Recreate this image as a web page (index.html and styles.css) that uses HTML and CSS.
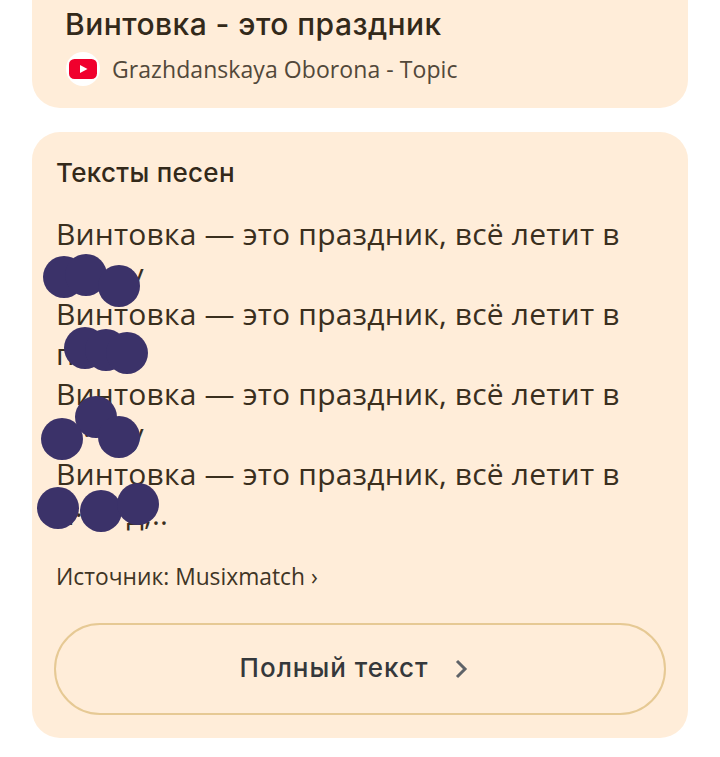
FILE: index.html
```html
<!DOCTYPE html>
<html lang="ru">
<head>
<meta charset="utf-8">
<title>Винтовка - это праздник</title>
<link rel="stylesheet" href="styles.css">
</head>
<body>
<main class="page">
  <section class="card card-top">
    <h1 class="title">Винтовка - это праздник</h1>
    <div class="channel">
      <span class="yt-badge">
        <svg class="yt-icon" viewBox="0 0 28 20" width="28" height="20" aria-hidden="true">
          <rect x="0" y="0" width="28" height="20" rx="5.5" fill="#f0002d"/>
          <path d="M11 6l7.5 4-7.5 4z" fill="#fff"/>
        </svg>
      </span>
      <span class="channel-name">Grazhdanskaya Oborona - Topic</span>
    </div>
  </section>
  <section class="card card-lyrics">
    <h2 class="heading">Тексты песен</h2>
    <div class="lyrics-wrap">
      <p class="lyrics">Винтовка — это праздник, всё летит в<br>п······&#8201;у<br>Винтовка — это праздник, всё летит в<br>п······&#8201;у<br>Винтовка — это праздник, всё летит в<br>п······&#8201;у<br>Винтовка — это праздник, всё летит в<br>п······&#8202;д,..</p>
      <svg class="blobs" viewBox="0 0 720 757" width="720" height="757" aria-hidden="true">
        <g fill="#3b3269">
          <circle cx="64" cy="277" r="21"/><circle cx="86" cy="275" r="21"/><circle cx="119" cy="286" r="21"/>
          <circle cx="85" cy="348" r="21"/><circle cx="106" cy="350" r="21"/><circle cx="127" cy="353" r="21"/>
          <circle cx="96" cy="417" r="21"/><circle cx="62" cy="439" r="21"/><circle cx="119" cy="437" r="21"/>
          <circle cx="58" cy="508" r="21"/><circle cx="101" cy="511" r="21"/><circle cx="138" cy="504" r="21"/>
        </g>
      </svg>
    </div>
    <a class="source">Источник: Musixmatch ›</a>
    <div class="full-btn">
      <span class="full-label">Полный текст</span>
      <svg class="chev" viewBox="0 0 16 22" width="16" height="22" aria-hidden="true">
        <path d="M3 3l8 8-8 8" fill="none" stroke="#5f6368" stroke-width="3"/>
      </svg>
    </div>
  </section>
</main>
</body>
</html>
```

FILE: styles.css
```css
html, body {
  margin: 0;
  padding: 0;
  background: #fff;
}
body {
  font-family: "Open Sans", "Noto Sans", sans-serif;
  overflow: hidden;
  height: 757px;
}
.page {
  display: flex;
  flex-direction: column;
  gap: 24px;
  padding: 0 32px;
  position: relative;
}
.card {
  background: #ffedd9;
}
.card-top {
  height: 108px;
  border-radius: 0 0 28px 28px;
  box-sizing: border-box;
  padding: 4px 33px 0;
}
.title {
  margin: 0;
  font-family: Inter, "Open Sans", sans-serif;
  font-size: 30px;
  letter-spacing: 0.45px;
  line-height: 40px;
  font-weight: 500;
  color: #33291a;
}
.channel {
  display: flex;
  align-items: center;
  gap: 12px;
  margin-top: 8px;
  margin-left: 1px;
}
.yt-badge {
  width: 34px;
  height: 34px;
  border-radius: 50%;
  background: #fff;
  display: flex;
  align-items: center;
  justify-content: center;
}
.channel-name {
  font-size: 23px;
  letter-spacing: 0.07px;
  line-height: 34px;
  color: #52483a;
}
.card-lyrics {
  height: 606px;
  border-radius: 28px;
  box-sizing: border-box;
  padding: 24px 22px 0 24px;
}
.heading {
  margin: 0;
  font-family: Inter, "Open Sans", sans-serif;
  font-size: 26px;
  letter-spacing: 0.3px;
  line-height: 34px;
  font-weight: 500;
  color: #33291a;
}
.lyrics-wrap {
  margin-top: 24px;
}
.lyrics {
  margin: 0;
  font-size: 30px;
  letter-spacing: 0.2px;
  line-height: 40px;
  color: #3a2f1e;
  white-space: nowrap;
}
.blobs {
  position: absolute;
  top: 0;
  left: 0;
  pointer-events: none;
}
.source {
  display: block;
  margin-top: 27px;
  font-size: 22.8px;
  line-height: 32px;
  color: #3f3525;
}
.full-btn {
  box-sizing: border-box;
  height: 92px;
  margin: 30px 0 0 -2px;
  width: 612px;
  border: 2px solid #e6c994;
  border-radius: 46px;
  padding: 0 10px 3px 0;
  display: flex;
  align-items: center;
  justify-content: center;
  gap: 26px;
}
.full-label {
  font-family: Inter, "Open Sans", sans-serif;
  font-size: 26px;
  letter-spacing: 1px;
  font-weight: 500;
  color: #35383b;
}
.chev {
  margin-top: 3px;
}
```
